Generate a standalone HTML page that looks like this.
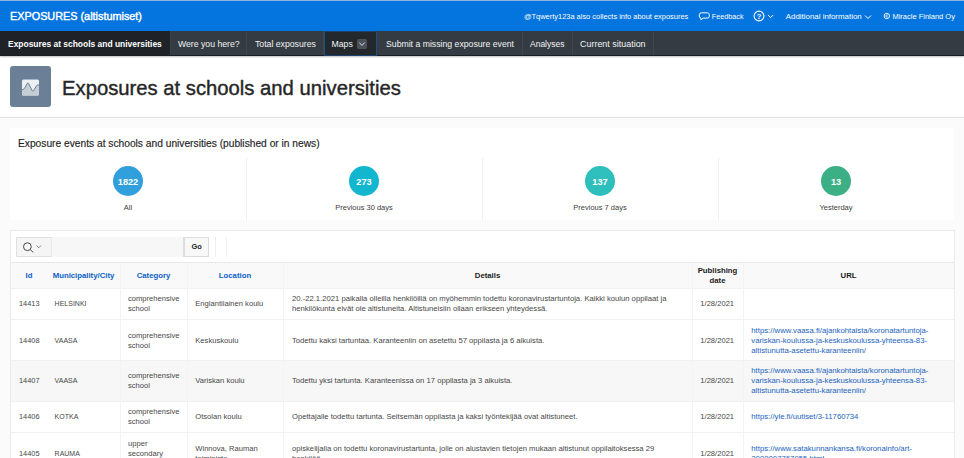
<!DOCTYPE html>
<html><head><meta charset="utf-8">
<style>
*{margin:0;padding:0;box-sizing:border-box}
html,body{width:964px;height:458px;overflow:hidden;background:#fbfbfb;font-family:"Liberation Sans",sans-serif}
.a{position:absolute}
.t{position:absolute;white-space:nowrap;line-height:1}
#hdr{left:0;top:0;width:964px;height:31px;background:#0474de;border-top:1px solid #86b4e2}
#nav{left:0;top:31px;width:964px;height:25px;background:#343b42;border-bottom:1px solid #1b1f23;box-shadow:0 1px 1.5px rgba(0,0,0,.25);z-index:2}
.tab{position:absolute;top:0;height:24px;border-right:1px solid #3f474e}
.tab span{position:absolute;top:8.5px;white-space:nowrap;line-height:1;color:#f2f3f4;font-size:8.7px}
#ttl{left:0;top:56px;width:964px;height:62px;background:#fff;border-bottom:1px solid #e2e2e2}
#card{left:10px;top:128px;width:944px;height:92px;background:#fff}
.col{position:absolute;top:30px;height:62px;border-left:1px solid #f0f0f0}
.badge{position:absolute;width:30.5px;height:30.5px;border-radius:50%;top:165.8px}
.bn{position:absolute;color:#fff;font-weight:bold;font-size:9.2px;line-height:1;white-space:nowrap;text-align:center}
.bl{position:absolute;color:#404040;font-size:7.5px;line-height:1;white-space:nowrap;text-align:center}
#rep{left:10px;top:230px;width:945px;height:240px;background:#fff;border:1px solid #eaeaea}
.row{position:absolute;left:11px;width:943px}
.c{position:absolute;display:flex;align-items:center;line-height:10px;font-size:7.6px;color:#474747}
.m{font-size:7.0px}.d{font-size:7.66px}.i{font-size:7.4px}
.hc{position:absolute;display:flex;align-items:center;justify-content:center;text-align:center;line-height:9.7px;font-size:7.75px;font-weight:bold;color:#1a1a1a}
.hc.s{color:#0b5fc8}
.vl{position:absolute;width:1px;background:#f3f3f3}
.hl{position:absolute;height:1px;background:#f1f1f1;left:11px;width:943px}
.lnk{color:#1b63bd;font-size:7.75px}
</style></head><body>

<!-- header -->
<div id="hdr" class="a"></div>
<div class="t" style="left:10px;top:11.1px;font-size:10.85px;color:#fff;-webkit-text-stroke:0.4px #fff">EXPOSURES (altistumiset)</div>
<div class="t" style="left:524px;top:13.05px;font-size:7.45px;color:#fff">@Tqwerty123a also collects info about exposures</div>
<svg class="a" style="left:698px;top:11px" width="13" height="11" viewBox="0 0 13 11"><path d="M3.3 1.8h6a2 2 0 0 1 2 2v1.3a2 2 0 0 1-2 2H5.2L3 8.9V7.1A2 2 0 0 1 1.3 5.1V3.8a2 2 0 0 1 2-2z" fill="none" stroke="#fff" stroke-width="1"/></svg>
<div class="t" style="left:711.8px;top:13.05px;font-size:7.22px;color:#fff">Feedback</div>
<svg class="a" style="left:753px;top:10px" width="22" height="12" viewBox="0 0 22 12"><circle cx="6" cy="6" r="4.9" fill="none" stroke="#fff" stroke-width="1.1"/><text x="6" y="8.7" font-family="Liberation Sans" font-size="7.5" font-weight="bold" fill="#fff" text-anchor="middle">?</text><path d="M15 5l2.6 2.6L20.2 5" fill="none" stroke="#fff" stroke-width="1"/></svg>
<div class="t" style="left:785.8px;top:13.05px;font-size:7.9px;color:#fff">Additional information</div>
<svg class="a" style="left:864px;top:13.5px" width="8" height="6" viewBox="0 0 8 6"><path d="M1 1.5l3 3 3-3" fill="none" stroke="#fff" stroke-width="1"/></svg>
<svg class="a" style="left:883px;top:12px" width="8" height="8" viewBox="0 0 8 8"><circle cx="3.8" cy="4" r="2.7" fill="none" stroke="#fff" stroke-width="0.9"/><path d="M4.9 3.2A1.2 1.2 0 1 0 4.9 4.8" fill="none" stroke="#fff" stroke-width="0.8"/></svg>
<div class="t" style="left:892.4px;top:13.05px;font-size:7.51px;color:#fff">Miracle Finland Oy</div>

<!-- nav -->
<div id="nav" class="a">
  <div class="tab" style="left:0;width:171px;background:#1f2327;border-right:1px solid #3a4148"><span style="left:8px;top:8.6px;font-weight:bold;font-size:8.45px;color:#fff">Exposures at schools and universities</span></div>
  <div class="tab" style="left:171px;width:76px"><span style="left:7px">Were you here?</span></div>
  <div class="tab" style="left:247px;width:77px"><span style="left:8px">Total exposures</span></div>
  <div class="tab" style="left:323.5px;top:0;height:24.5px;width:53.5px;background:#23282d;border:1px solid #1a4f8a;border-top-color:#1d4270;border-bottom-color:#1d4270"><span style="left:7px;top:7.5px">Maps</span>
    <div class="a" style="left:32.5px;top:6.5px;width:10px;height:10px;background:#4b5157;border-radius:1.5px"></div>
    <svg class="a" style="left:32.5px;top:6.5px" width="10" height="10" viewBox="0 0 10 10"><path d="M2.3 3.6l2.7 2.8 2.7-2.8" fill="none" stroke="#e8e8e8" stroke-width="0.9"/></svg>
  </div>
  <div class="tab" style="left:377px;width:146px"><span style="left:9px">Submit a missing exposure event</span></div>
  <div class="tab" style="left:523px;width:50px"><span style="left:7px;font-size:8.5px">Analyses</span></div>
  <div class="tab" style="left:573px;width:81px"><span style="left:7px;font-size:8.95px">Current situation</span></div>
</div>

<!-- title -->
<div id="ttl" class="a"></div>
<div class="a" style="left:10px;top:66px;width:41px;height:41px;background:#6b8096;border-radius:3px"></div>
<svg class="a" style="left:22px;top:78.5px" width="17" height="17" viewBox="0 0 17 17">
  <rect x="0" y="0.4" width="17" height="16.2" rx="1.5" fill="#edf0f2"/>
  <path d="M0 10.6 L1.6 10.2 Q2 10 2.4 9.5 L5.3 4.3 Q5.9 3.4 6.5 4.3 L10.3 11.9 Q10.9 12.9 11.5 11.9 L14.6 6.6 Q15 6 15.8 6 H17 V15.1 a1.5 1.5 0 0 1-1.5 1.5 H1.5 A1.5 1.5 0 0 1 0 15.1z" fill="#c6cdd4"/>
  <path d="M0 10.6 L1.6 10.2 Q2 10 2.4 9.5 L5.3 4.3 Q5.9 3.4 6.5 4.3 L10.3 11.9 Q10.9 12.9 11.5 11.9 L14.6 6.6 Q15 6 15.8 6 H17" fill="none" stroke="#6b8096" stroke-width="1"/>
</svg>
<div class="t" style="left:62px;top:77.56px;font-size:20.25px;color:#262626;-webkit-text-stroke:0.4px #262626">Exposures at schools and universities</div>

<!-- card -->
<div id="card" class="a">
  <div class="col" style="left:236px"></div>
  <div class="col" style="left:472px"></div>
  <div class="col" style="left:708px"></div>
</div>
<div class="t" style="left:18px;top:139.3px;font-size:10.23px;color:#1e1e1e;-webkit-text-stroke:0.15px #1e1e1e">Exposure events at schools and universities (published or in news)</div>
<div class="badge" style="left:112.8px;background:#309fdb"></div>
<div class="badge" style="left:348.8px;background:#13b6cf"></div>
<div class="badge" style="left:584.8px;background:#2ebfbc"></div>
<div class="badge" style="left:820.8px;background:#3caf85"></div>
<div class="bn" style="left:88px;width:80px;top:177.5px">1822</div>
<div class="bn" style="left:324px;width:80px;top:177.5px">273</div>
<div class="bn" style="left:560px;width:80px;top:177.5px">137</div>
<div class="bn" style="left:796px;width:80px;top:177.5px">13</div>
<div class="bl" style="left:78px;width:100px;top:204px">All</div>
<div class="bl" style="left:314px;width:100px;top:204px">Previous 30 days</div>
<div class="bl" style="left:550px;width:100px;top:204px">Previous 7 days</div>
<div class="bl" style="left:786px;width:100px;top:204px">Yesterday</div>

<!-- report -->
<div id="rep" class="a"></div>
<!-- toolbar -->
<div class="a" style="left:16px;top:237px;width:192.5px;height:20px;background:#f5f5f5;border:1px solid #e0e0e0;border-radius:1px"></div>
<div class="a" style="left:50.5px;top:237px;width:133px;height:20px;background:#f7f7f7;border-left:1px solid #e8e8e8;border-right:1px solid #dcdcdc"></div>
<div class="a" style="left:183.5px;top:237px;width:25px;height:20px;background:#f8f8f8;border:1px solid #dcdcdc"></div>
<div class="t" style="left:191.4px;top:242.9px;font-size:7.5px;font-weight:bold;color:#262626">Go</div>
<svg class="a" style="left:21px;top:241px" width="22" height="13" viewBox="0 0 22 13"><circle cx="6.4" cy="5.7" r="3.9" fill="none" stroke="#4a4a4a" stroke-width="1"/><path d="M9.2 8.5l3 2.9" stroke="#4a4a4a" stroke-width="1"/><path d="M15.5 4.5l2.3 2.3 2.3-2.3" fill="none" stroke="#777" stroke-width="0.9"/></svg>
<div class="a" style="left:215px;top:237px;width:1px;height:20px;background:#efefef"></div>
<div class="a" style="left:225.5px;top:237px;width:1px;height:20px;background:#efefef"></div>

<!-- table header -->
<div class="a" style="left:11px;top:262px;width:943px;height:27px;background:#f9f9f9;border-top:1px solid #e8e8e8;border-bottom:1px solid #f1f1f1"></div>
<div class="hc s" style="left:11px;width:36px;top:263px;height:25px">Id</div>
<div class="hc s" style="left:47px;width:73px;top:263px;height:25px">Municipality/City</div>
<div class="hc s" style="left:120px;width:67px;top:263px;height:25px">Category</div>
<div class="hc s" style="left:187px;width:96px;top:263px;height:25px">Location</div>
<div class="hc" style="left:283px;width:409px;top:263px;height:25px">Details</div>
<div class="hc" style="left:692px;width:51px;top:263px;height:25px">Publishing<br>date</div>
<div class="hc" style="left:743px;width:211px;top:263px;height:25px">URL</div>

<!-- stripe row 3 -->
<div class="a" style="left:11px;top:361px;width:943px;height:40px;background:#f7f7f7"></div>

<!-- column lines -->
<div class="vl" style="left:120px;top:263px;height:200px"></div>
<div class="vl" style="left:187px;top:263px;height:200px"></div>
<div class="vl" style="left:283px;top:263px;height:200px"></div>
<div class="vl" style="left:692px;top:263px;height:200px"></div>
<div class="vl" style="left:743px;top:263px;height:200px"></div>
<!-- row lines -->
<div class="hl" style="top:319px"></div>
<div class="hl" style="top:360px"></div>
<div class="hl" style="top:401px"></div>
<div class="hl" style="top:432px"></div>

<!-- row 1 -->
<div class="c i" style="left:19px;top:289px;height:30px">14413</div>
<div class="c m" style="left:54.6px;top:289px;height:30px">HELSINKI</div>
<div class="c" style="left:128px;top:289px;height:30px">comprehensive<br>school</div>
<div class="c" style="left:195.3px;top:289px;height:30px">Englantilainen koulu</div>
<div class="c d" style="left:292px;top:289px;height:30px">20.-22.1.2021 paikalla olleilla henkilöillä on myöhemmin todettu koronavirustartuntoja. Kaikki koulun oppilaat ja<br>henkilökunta eivät ole altistuneita. Altistuneisiin ollaan erikseen yhteydessä.</div>
<div class="c" style="left:700.3px;top:289px;height:30px">1/28/2021</div>

<!-- row 2 -->
<div class="c i" style="left:19px;top:320px;height:41px">14408</div>
<div class="c m" style="left:54.6px;top:320px;height:41px">VAASA</div>
<div class="c" style="left:128px;top:320px;height:41px">comprehensive<br>school</div>
<div class="c" style="left:195.3px;top:320px;height:41px">Keskuskoulu</div>
<div class="c d" style="left:292px;top:320px;height:41px">Todettu kaksi tartuntaa. Karanteeniin on asetettu 57 oppilasta ja 6 aikuista.</div>
<div class="c" style="left:700.3px;top:320px;height:41px">1/28/2021</div>
<div class="c lnk" style="left:751.3px;top:320px;height:41px">https://www.vaasa.fi/ajankohtaista/koronatartuntoja-<br>variskan-koulussa-ja-keskuskoulussa-yhteensa-83-<br>altistunutta-asetettu-karanteeniin/</div>

<!-- row 3 -->
<div class="c i" style="left:19px;top:361px;height:40px">14407</div>
<div class="c m" style="left:54.6px;top:361px;height:40px">VAASA</div>
<div class="c" style="left:128px;top:361px;height:40px">comprehensive<br>school</div>
<div class="c" style="left:195.3px;top:361px;height:40px">Variskan koulu</div>
<div class="c d" style="left:292px;top:361px;height:40px">Todettu yksi tartunta. Karanteenissa on 17 oppilasta ja 3 aikuista.</div>
<div class="c" style="left:700.3px;top:361px;height:40px">1/28/2021</div>
<div class="c lnk" style="left:751.3px;top:361px;height:40px">https://www.vaasa.fi/ajankohtaista/koronatartuntoja-<br>variskan-koulussa-ja-keskuskoulussa-yhteensa-83-<br>altistunutta-asetettu-karanteeniin/</div>

<!-- row 4 -->
<div class="c i" style="left:19px;top:401px;height:32px">14406</div>
<div class="c m" style="left:54.6px;top:401px;height:32px">KOTKA</div>
<div class="c" style="left:128px;top:401px;height:32px">comprehensive<br>school</div>
<div class="c" style="left:195.3px;top:401px;height:32px">Otsolan koulu</div>
<div class="c d" style="left:292px;top:401px;height:32px">Opettajalle todettu tartunta. Seitsemän oppilasta ja kaksi työntekijää ovat altistuneet.</div>
<div class="c" style="left:700.3px;top:401px;height:32px">1/28/2021</div>
<div class="c lnk" style="left:751.3px;top:401px;height:32px">https://yle.fi/uutiset/3-11760734</div>

<!-- row 5 -->
<div class="c i" style="left:19px;top:433px;height:41px">14405</div>
<div class="c m" style="left:54.6px;top:433px;height:41px">RAUMA</div>
<div class="c" style="left:128px;top:433px;height:41px">upper<br>secondary<br>school</div>
<div class="c" style="left:195.3px;top:433px;height:41px">Winnova, Rauman<br>toimipiste</div>
<div class="c d" style="left:292px;top:433px;height:41px">opiskelijalla on todettu koronavirustartunta, jolle on alustavien tietojen mukaan altistunut oppilaitoksessa 29<br>henkilöä.</div>
<div class="c" style="left:700.3px;top:433px;height:41px">1/28/2021</div>
<div class="c lnk" style="left:751.3px;top:433px;height:41px">https://www.satakunnankansa.fi/koronainfo/art-<br>2000007767955.html</div>

</body></html>
